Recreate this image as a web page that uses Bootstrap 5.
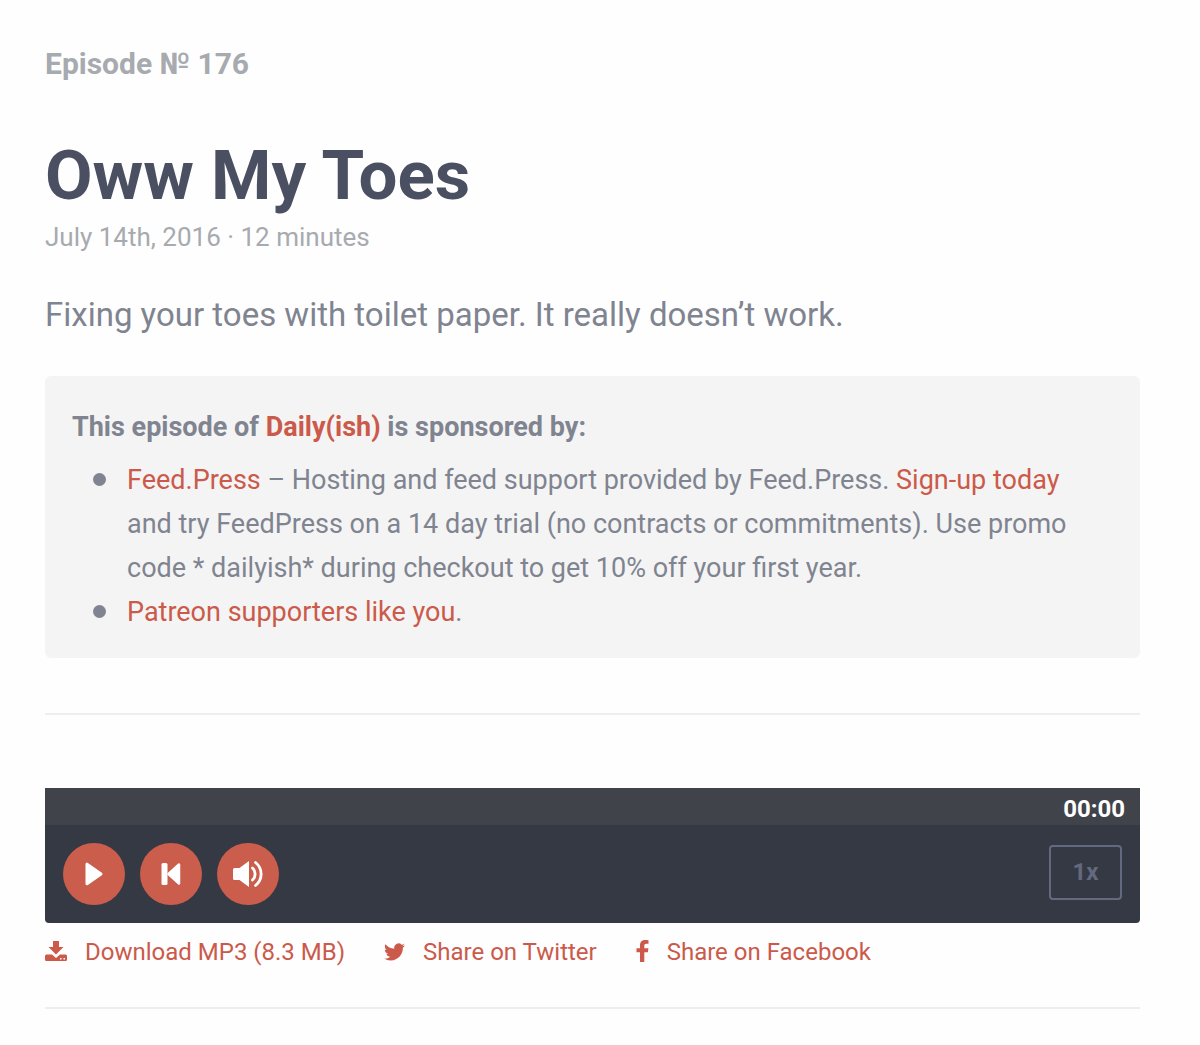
<!DOCTYPE html>
<html lang="en">
<head>
<meta charset="utf-8">
<meta name="viewport" content="width=device-width, initial-scale=1">
<title>Oww My Toes – Daily(ish)</title>
<link href="https://cdn.jsdelivr.net/npm/bootstrap@5.3.0/dist/css/bootstrap.min.css" rel="stylesheet">
<style>
  body { font-family: Roboto, "Liberation Sans", sans-serif; font-size: 27px; line-height: 44px; color: #7f8490; background: #fefefe; }
  a { color: #cb5a4a; text-decoration: none; }
  a:hover { color: #a94437; }
  .episode-page { padding: 40px 60px 36px 45px; }
  .episode-no { font-size: 30px; line-height: 48px; color: #a7aaaf; }
  .episode-title { font-size: 69px; line-height: 80px; color: #4a5062; margin: 48px 0 0; }
  .episode-date { font-size: 26px; line-height: 42px; color: #a7aaaf; }
  .episode-intro { font-size: 33px; line-height: 48px; margin: 33px 0 37px; }
  .sponsor-box { background: #f4f4f4; border-radius: 6px; padding: 29px 27px 24px; }
  .sponsor-list { padding: 0 20px 0 55px; margin: 9px 0 0; list-style: none; }
  .sponsor-list li { position: relative; }
  .sponsor-list li::before { content: ""; position: absolute; left: -34px; top: 15px; width: 13px; height: 13px; border-radius: 50%; background: #7f8490; }
  .rule { border-top: 2px solid #eee; opacity: 1; margin: 0; }
  .sponsor-box + .rule { margin-top: 55px; }
  .player { background: #353943; border-radius: 0 0 4px 4px; margin-top: 73px; color: #fff; }
  .player-time { background: #41434b; height: 37px; line-height: 42px; font-size: 24px; padding-right: 15px; }
  .player-controls { padding: 18px; }
  .player-buttons { gap: 15px; }
  .round-btn { width: 62px; height: 62px; background: #cb5d4d; color: #fff; border: 0; }
  .speed-btn { width: 73px; height: 55px; border: 2px solid #636a80; border-radius: 4px; background: transparent; color: #636a80; font-size: 24px; margin-bottom: 4px; }
  .share-row { font-size: 24px; line-height: 36px; gap: 0 39px; padding: 11px 0 37px; }
  .share-row svg { margin-right: 18px; }
  svg { fill: currentColor; flex: none; }
</style>
<script src="https://cdn.jsdelivr.net/npm/bootstrap@5.3.0/dist/js/bootstrap.bundle.min.js"></script>
</head>
<body>
<main class="episode-page">
  <header>
    <p class="episode-no fw-bold mb-0">Episode № 176</p>
    <h1 class="episode-title fw-bold">Oww My Toes</h1>
    <p class="episode-date mb-0">July 14th, 2016 · 12 minutes</p>
  </header>
  <p class="episode-intro">Fixing your toes with toilet paper. It really doesn’t work.</p>

  <section class="sponsor-box">
    <p class="fw-bold mb-0">This episode of <a href="#">Daily(ish)</a> is sponsored by:</p>
    <ul class="sponsor-list">
      <li><a href="#">Feed.Press</a> – Hosting and feed support provided by Feed.Press. <a href="#">Sign-up today</a> and try FeedPress on a 14 day trial (no contracts or commitments). Use promo code * dailyish* during checkout to get 10% off your first year.</li>
      <li><a href="#">Patreon supporters like you</a>.</li>
    </ul>
  </section>

  <hr class="rule">

  <section class="player" aria-label="Audio player">
    <div class="player-time fw-bold text-end">00:00</div>
    <div class="player-controls d-flex align-items-center justify-content-between">
      <div class="player-buttons d-flex">
        <button type="button" class="round-btn rounded-circle d-flex align-items-center justify-content-center p-0" aria-label="Play">
          <svg width="18" height="24" viewBox="0 0 18 24"><path d="M2 2.200v19.600L16 12z" stroke="currentColor" stroke-width="3" stroke-linejoin="round"/></svg>
        </button>
        <button type="button" class="round-btn rounded-circle d-flex align-items-center justify-content-center p-0" aria-label="Back to start">
          <svg width="20" height="24" viewBox="0 0 20 24"><rect x="0.5" y="1" width="6" height="22" rx="1.5"/><path d="M18 2.500v19L7.500 12z" stroke="currentColor" stroke-width="2.500" stroke-linejoin="round"/></svg>
        </button>
        <button type="button" class="round-btn rounded-circle d-flex align-items-center justify-content-center p-0" aria-label="Volume">
          <svg width="30" height="28" viewBox="0 0 30 28"><path d="M1.500 8h5l9.500-7v26l-9.500-7h-5q-1.500 0-1.500-1.500v-9Q0 8 1.500 8z"/><path d="M19.500 8c3.500 3 3.500 9 0 12M22.500 2.500c7.500 6 7.500 17 0 23" fill="none" stroke="currentColor" stroke-width="2.800" stroke-linecap="round"/></svg>
        </button>
      </div>
      <button type="button" class="speed-btn fw-bold p-0" aria-label="Playback speed">1x</button>
    </div>
  </section>

  <nav class="share-row d-flex flex-wrap" aria-label="Download and share">
    <a href="#" class="d-flex align-items-center"><svg width="22" height="24" viewBox="0 0 22 24"><path d="M8 1h6v6h4.500L11 14.500 3.500 7H8z"/><path fill-rule="evenodd" d="M1.500 14.500H7l4 3.500 4-3.500h5.500Q22 14.500 22 16v3.500q0 1.500-1.500 1.500h-19Q0 21 0 19.500V16q0-1.500 1.500-1.500zM15 18v1.500h1.500V18zM18.500 18v1.500H20V18z"/></svg>Download MP3 (8.3 MB)</a>
    <a href="#" class="d-flex align-items-center"><svg width="21" height="22" viewBox="0 0 24 24"><path d="M23.953 4.570a10 10 0 01-2.825.775 4.958 4.958 0 002.163-2.723c-.951.555-2.005.959-3.127 1.184a4.920 4.920 0 00-8.384 4.482C7.690 8.095 4.067 6.130 1.640 3.162a4.822 4.822 0 00-.666 2.475c0 1.710.870 3.213 2.188 4.096a4.904 4.904 0 01-2.228-.616v.060a4.923 4.923 0 003.946 4.827 4.996 4.996 0 01-2.212.085 4.936 4.936 0 004.604 3.417 9.867 9.867 0 01-6.102 2.105c-.390 0-.779-.023-1.170-.067a13.995 13.995 0 007.557 2.209c9.053 0 13.998-7.496 13.998-13.985 0-.210 0-.420-.015-.630A9.935 9.935 0 0024 4.590z"/></svg>Share on Twitter</a>
    <a href="#" class="d-flex align-items-center"><svg width="13" height="26" viewBox="0 0 13 26"><path d="M12.500 1.200v3.600h-2.100C8.700 4.800 8.300 5.600 8.300 6.800v2.500h4.100l-.5 4H8.300V23H4V13.300H.5v-4H4V6.200C4 2.800 6.100 1 9.200 1c1.500 0 2.800.1 3.300.2z"/></svg>Share on Facebook</a>
  </nav>
  <hr class="rule">
</main>
</body>
</html>
